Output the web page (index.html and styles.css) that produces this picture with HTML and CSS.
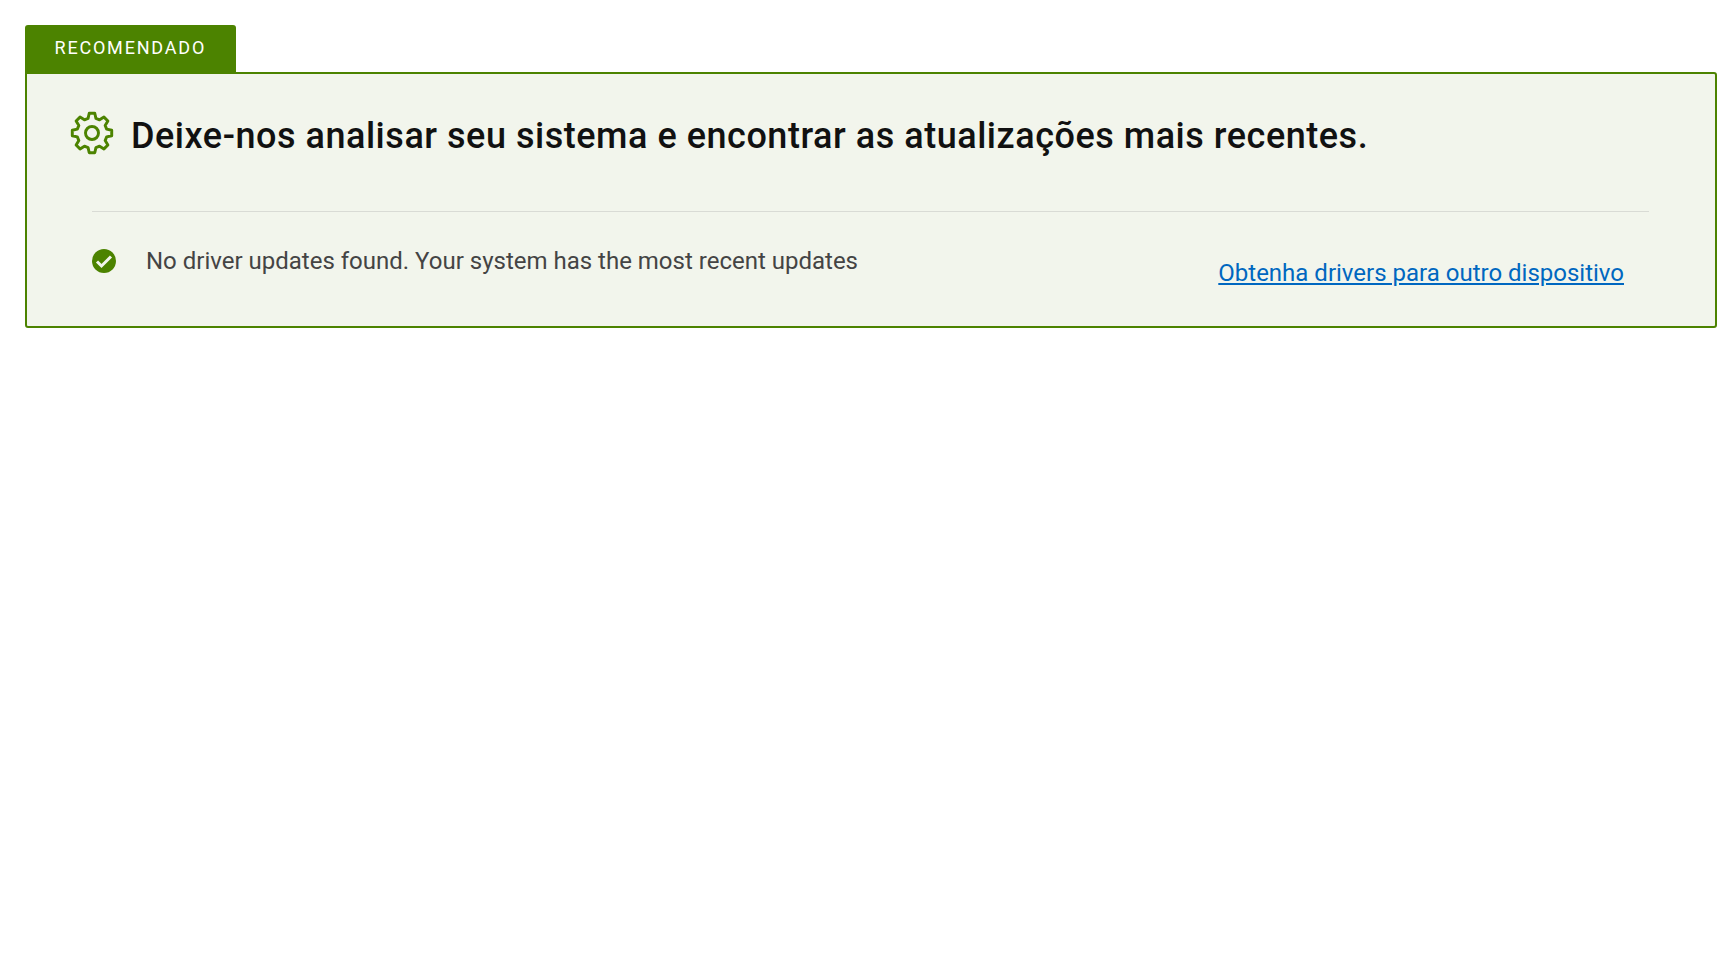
FILE: index.html
```html
<!DOCTYPE html>
<html lang="pt">
<head>
    <meta charset="UTF-8">
    <meta name="viewport" content="width=device-width, initial-scale=1.0">
    <title>Atualizações de drivers</title>
    <link rel="stylesheet" href="styles.css">
</head>
<body>
    <div class="wrapper">
        <div class="tab">RECOMENDADO</div>
        <div class="card">
            <div class="card-head">
                <!-- gear icon -->
                <svg class="gear" viewBox="-21 -21 42 42" aria-hidden="true">
                    <polygon points="2.64,-18.81 3.75,-14 7.25,-12.56 11.43,-15.17 15.17,-11.43 12.56,-7.25 14,-3.75 18.81,-2.64 18.81,2.64 14,3.75 12.56,7.25 15.17,11.43 11.43,15.17 7.25,12.56 3.75,14 2.64,18.81 -2.64,18.81 -3.75,14 -7.25,12.56 -11.43,15.17 -15.17,11.43 -12.56,7.25 -14,3.75 -18.81,2.64 -18.81,-2.64 -14,-3.75 -12.56,-7.25 -15.17,-11.43 -11.43,-15.17 -7.25,-12.56 -3.75,-14 -2.64,-18.81"/>
                    <circle r="6.2"/>
                </svg>
                <h1>Deixe-nos analisar seu sistema e encontrar as atualizações mais recentes.</h1>
            </div>
            <div class="card-body">
                <div class="status">
                    <svg class="check" viewBox="0 0 24 24" aria-hidden="true">
                        <circle cx="12" cy="12" r="12"/>
                        <path d="M5 12.5l4.5 4.5L19 7.5"/>
                    </svg>
                    <p>No driver updates found. Your system has the most recent updates</p>
                </div>
                <a class="other-device" href="#">Obtenha drivers para outro dispositivo</a>
            </div>
        </div>
    </div>
</body>
</html>
```

FILE: styles.css
```css
body {
    font-family: Roboto, "Liberation Sans", sans-serif;
    background-color: #fff;
    margin: 0;
    padding: 0;
}

.wrapper {
    padding: 25px 14px 0 25px;
}

.tab {
    width: 211px;
    height: 47px;
    box-sizing: border-box;
    padding: 12px 0 0 29.5px;
    background-color: #4c8300;
    color: #fff;
    font-size: 18px;
    line-height: 22px;
    letter-spacing: 1.8px;
    border-radius: 3px 3px 0 0;
}

.card {
    height: 256px;
    box-sizing: border-box;
    border: 2px solid #4c8300;
    border-radius: 0 3px 3px 3px;
    background-color: #f2f5ec;
}

.card-head {
    display: flex;
    align-items: flex-start;
    gap: 17px;
    padding: 37px 0 0 43px;
}

.gear {
    width: 44px;
    height: 44px;
    flex-shrink: 0;
    fill: none;
    stroke: #4c8300;
    stroke-width: 2.8;
    stroke-linejoin: round;
}

.card-head h1 {
    margin: 4px 0 0;
    color: #111;
    font-size: 36px;
    font-weight: 500;
    line-height: 42px;
    letter-spacing: 0.53px;
}

.card-body {
    display: flex;
    justify-content: space-between;
    margin: 54px 66px 0 65px;
    padding: 25px 25px 0 0;
    border-top: 1px solid #d9dbd5;
}

.status {
    display: flex;
    align-items: center;
    gap: 30px;
    height: 48px;
}

.status p {
    margin: 0;
    color: #444;
    font-size: 24px;
    line-height: 30px;
}

.check {
    width: 24px;
    height: 24px;
    flex-shrink: 0;
}

.check circle {
    fill: #4c8300;
}

.check path {
    fill: none;
    stroke: #f2f5ec;
    stroke-width: 3;
}

.other-device {
    margin-top: 21px;
    color: #0067c0;
    font-size: 24px;
    line-height: 30px;
}
```
